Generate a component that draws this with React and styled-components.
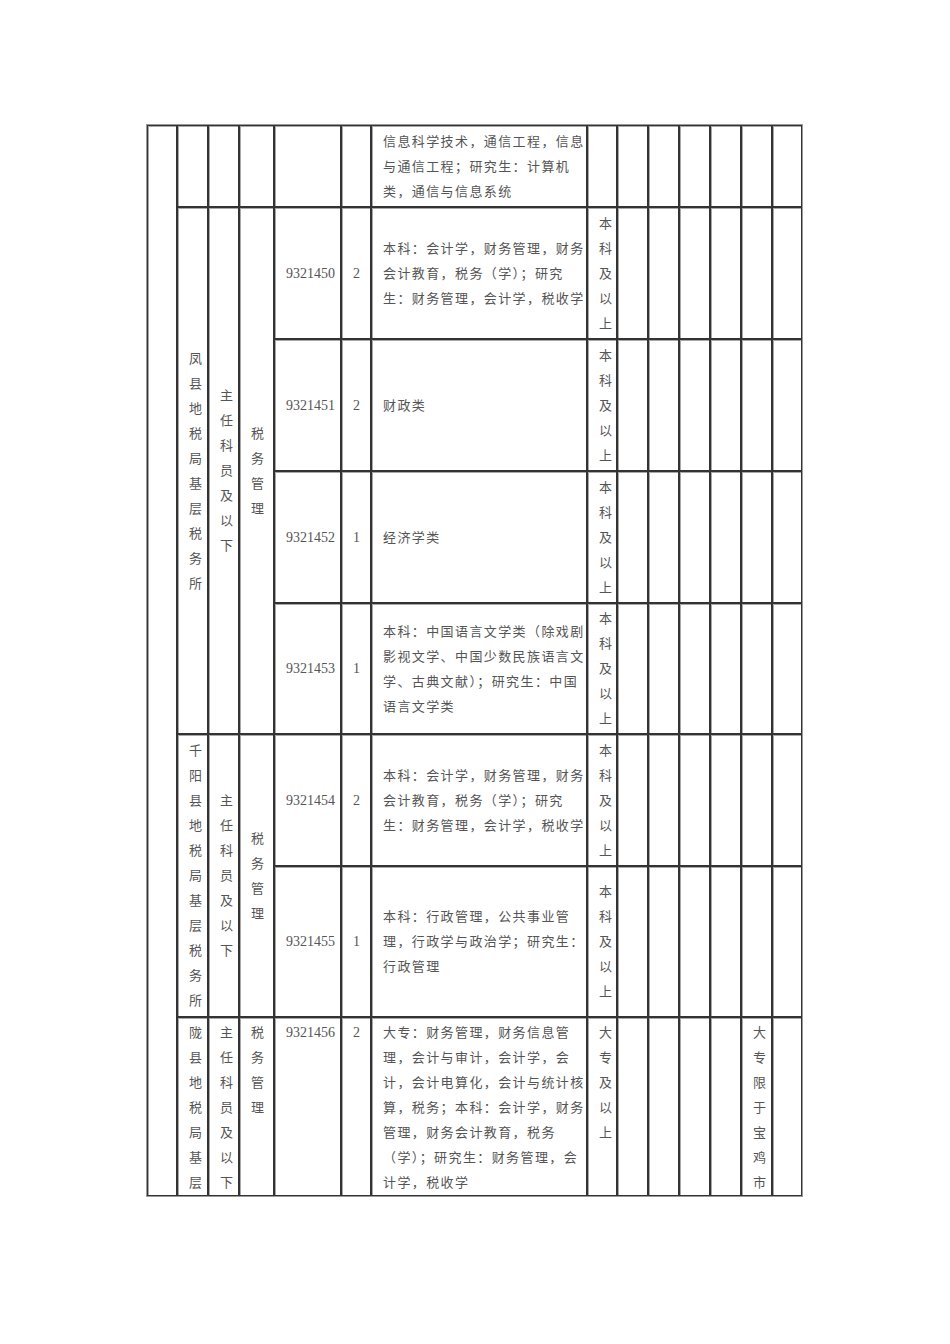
import React from 'react'
import styled, { createGlobalStyle } from 'styled-components'

const GlobalStyle = createGlobalStyle`
  body {
    margin: 0;
    background: #fff;
  }
`

const Page = styled.div`
  padding: 124px 0 0 146px;
`

const Sheet = styled.table`
  border: 1px solid #9a9a9a;
  border-collapse: separate;
  border-spacing: 0;
  table-layout: fixed;
  width: 657px;
  font-family: 'Liberation Serif', 'Noto Sans CJK SC', serif;
  font-size: 13px;
  line-height: 25px;
  color: #555;
`

const Row = styled.tr`
  height: ${(p) => p.$h}px;
`

const Cell = styled.td`
  box-sizing: border-box;
  width: ${(p) => (p.$w ? `${p.$w}px` : 'auto')};
  border: 1px solid #333;
  box-shadow: inset 1px 1px 0 #a8a8a8;
  padding: ${(p) => (p.$top ? '2px' : '0')} 0 0 11px;
  vertical-align: ${(p) => (p.$top ? 'top' : 'middle')};
  text-align: left;
  letter-spacing: 1.4px;
  word-break: break-all;
  overflow: hidden;
`

const Line = styled.span`
  display: block;
  white-space: nowrap;
`

const Code = styled.span`
  font-family: 'Liberation Serif', serif;
  font-size: 14px;
  letter-spacing: 0;
`

const widths = [30, 31, 31, 35, 67, 30, 216, 30, 31, 31, 31, 31, 31, 30]

const Text = ({ lines }) => lines.map((l) => <Line key={l}>{l}</Line>)

const Empty = ({ count }) =>
  Array.from({ length: count }, (_, i) => <Cell key={i} />)

const posts = [
  {
    h: 132,
    code: '9321450',
    n: '2',
    lines: ['本科：会计学，财务管理，财务', '会计教育，税务（学）；研究', '生：财务管理，会计学，税收学'],
  },
  { h: 132, code: '9321451', n: '2', lines: ['财政类'] },
  { h: 132, code: '9321452', n: '1', lines: ['经济学类'] },
  {
    h: 131,
    code: '9321453',
    n: '1',
    lines: [
      '本科：中国语言文学类（除戏剧',
      '影视文学、中国少数民族语言文',
      '学、古典文献）；研究生：中国',
      '语言文学类',
    ],
  },
  {
    h: 132,
    code: '9321454',
    n: '2',
    lines: ['本科：会计学，财务管理，财务', '会计教育，税务（学）；研究', '生：财务管理，会计学，税收学'],
  },
  {
    h: 151,
    code: '9321455',
    n: '1',
    lines: ['本科：行政管理，公共事业管', '理，行政学与政治学；研究生：', '行政管理'],
  },
]

function PostCells({ post, level = '本科及以上' }) {
  return (
    <>
      <Cell>
        <Code>{post.code}</Code>
      </Cell>
      <Cell>
        <Code>{post.n}</Code>
      </Cell>
      <Cell>
        <Text lines={post.lines} />
      </Cell>
      <Cell>{level}</Cell>
      <Empty count={6} />
    </>
  )
}

function Office({ name, span }) {
  return (
    <>
      <Cell rowSpan={span}>{name}</Cell>
      <Cell rowSpan={span}>主任科员及以下</Cell>
      <Cell rowSpan={span}>税务管理</Cell>
    </>
  )
}

export default function App() {
  return (
    <>
      <GlobalStyle />
      <Page>
        <Sheet>
          <tbody>
            <Row $h={82}>
              <Cell $w={widths[0]} rowSpan={8} />
              {widths.slice(1).map((w, i) => (
                <Cell key={i} $w={w}>
                  {i === 5 && (
                    <Text
                      lines={['信息科学技术，通信工程，信息', '与通信工程；研究生：计算机', '类，通信与信息系统']}
                    />
                  )}
                </Cell>
              ))}
            </Row>

            <Row $h={posts[0].h}>
              <Office name="凤县地税局基层税务所" span={4} />
              <PostCells post={posts[0]} />
            </Row>
            {posts.slice(1, 4).map((post) => (
              <Row key={post.code} $h={post.h}>
                <PostCells post={post} />
              </Row>
            ))}

            <Row $h={posts[4].h}>
              <Office name="千阳县地税局基层税务所" span={2} />
              <PostCells post={posts[4]} />
            </Row>
            <Row $h={posts[5].h}>
              <PostCells post={posts[5]} />
            </Row>

            <Row $h={178}>
              <Cell $top>陇县地税局基层</Cell>
              <Cell $top>主任科员及以下</Cell>
              <Cell $top>税务管理</Cell>
              <Cell $top>
                <Code>9321456</Code>
              </Cell>
              <Cell $top>
                <Code>2</Code>
              </Cell>
              <Cell $top>
                <Text
                  lines={[
                    '大专：财务管理，财务信息管',
                    '理，会计与审计，会计学，会',
                    '计，会计电算化，会计与统计核',
                    '算，税务；本科：会计学，财务',
                    '管理，财务会计教育，税务',
                    '（学）；研究生：财务管理，会',
                    '计学，税收学',
                  ]}
                />
              </Cell>
              <Cell $top>大专及以上</Cell>
              <Empty count={4} />
              <Cell $top>大专限于宝鸡市</Cell>
              <Cell />
            </Row>
          </tbody>
        </Sheet>
      </Page>
    </>
  )
}
